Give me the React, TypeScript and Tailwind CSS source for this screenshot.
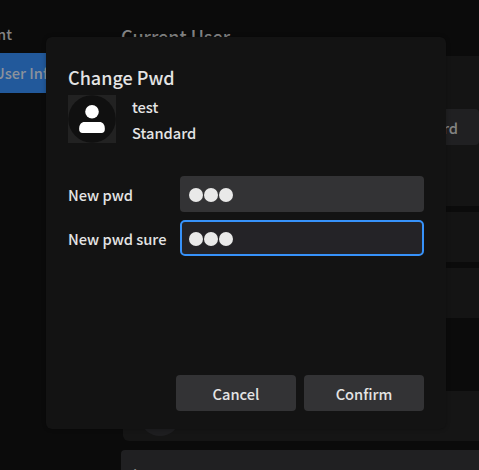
import type { ReactNode } from "react";

function Avatar() {
  return (
    <svg width="48" height="48" viewBox="0 0 48 48" className="shrink-0">
      <rect width="48" height="48" fill="#222222" />
      <circle cx="24" cy="24" r="23.8" fill="#101010" />
      <circle cx="24" cy="16.7" r="6.8" fill="#ffffff" />
      <path d="M16.500 27h15c3.200 0 5.300 2.700 5.300 6.200v1.600c0 2-1.200 3.200-3.200 3.200H14.400c-2 0-3.200-1.200-3.200-3.200v-1.600c0-3.500 2.100-6.200 5.300-6.200z" fill="#ffffff" />
    </svg>
  );
}

function Field({ label, focused }: { label: string; focused?: boolean }) {
  return (
    <label className="flex h-9 items-center">
      <span className="w-28 shrink-0 pt-px leading-6 whitespace-nowrap">{label}</span>
      <span
        className={
          focused
            ? "flex h-9 flex-1 items-center rounded-[5px] border-2 border-[#3792fa] bg-[#242327] pt-[2px] pl-1.5"
            : "flex h-9 flex-1 items-center rounded-[4px] bg-[#333335] pt-[2px] pl-2"
        }
      >
        {[0, 1, 2].map((i) => (
          <span key={i} className="mr-[0.5px] ml-[0.500px] size-[14px] rounded-full bg-[#e9e9e9]" />
        ))}
      </span>
    </label>
  );
}

function Button({ children }: { children: ReactNode }) {
  return (
    <button className="flex h-9 w-[120px] items-center justify-center rounded-[4px] bg-[#333335] pt-px leading-6 font-medium">
      {children}
    </button>
  );
}

function SettingsPage() {
  return (
    <div className="flex h-[470px] w-[479px] leading-6 font-medium text-[#848484]">
      <nav className="w-[110px] shrink-0 overflow-hidden pt-[22px]">
        <div className="flex w-[12px] justify-end whitespace-nowrap">Account</div>
        <div className="mt-[7px] flex h-10 items-center bg-[#22599b] text-[#8c929b]">
          <span className="-ml-[6px] whitespace-nowrap">User Info</span>
        </div>
      </nav>
      <main className="flex w-[369px] flex-col pl-[11px]">
        <h1 className="mt-[21px] h-[35px] text-lg leading-[30px] font-medium">Current User</h1>
        <section className="flex h-[150px] items-center justify-end bg-[#141414]">
          <div className="mb-[8px] flex h-9 w-[120px] items-center justify-end rounded-[4px] bg-[#202022] pt-px pr-[21px]">Standard</div>
        </section>
        <section className="mt-[6px] h-[50px] bg-[#141414]" />
        <section className="mt-[6px] h-[50px] bg-[#141414]" />
        <section className="mt-[73px] ml-[2px] flex h-[50px] items-center rounded-l-[6px] bg-[#151515] pl-[17px]">
          <div className="size-10 rounded-full bg-[#1e1e20]" />
        </section>
        <div className="mt-[9px] h-[20px] overflow-hidden rounded-tl-[4px] bg-[#202022] pt-[13px] pl-[12px]">l</div>
      </main>
    </div>
  );
}

export default function App() {
  return (
    <div className="relative h-[470px] w-[479px] overflow-hidden bg-[#0b0b0b] font-['Noto_Sans_CJK_SC','Noto_Sans',sans-serif] text-[14.667px]">
      <SettingsPage />
      <div
        role="dialog"
        className="absolute top-[37px] left-[46px] flex h-[392px] w-[400px] flex-col rounded-[6px] bg-[#131313] px-[22px] pb-[18px] font-medium text-[#e4e4e4] shadow-[0_0_4px_rgba(0,0,0,0.3)]"
      >
        <h2 className="mt-[25px] h-[33px] text-lg leading-[30px] font-medium">Change Pwd</h2>
        <div className="flex h-12 items-center gap-4">
          <Avatar />
          <div className="flex flex-col pt-px leading-[26px]">
            <span>test</span>
            <span>Standard</span>
          </div>
        </div>
        <div className="mt-[33px] flex flex-col gap-2">
          <Field label="New pwd" />
          <Field label="New pwd sure" focused />
        </div>
        <div className="mt-auto flex justify-end gap-2">
          <Button>Cancel</Button>
          <Button>Confirm</Button>
        </div>
      </div>
    </div>
  );
}
